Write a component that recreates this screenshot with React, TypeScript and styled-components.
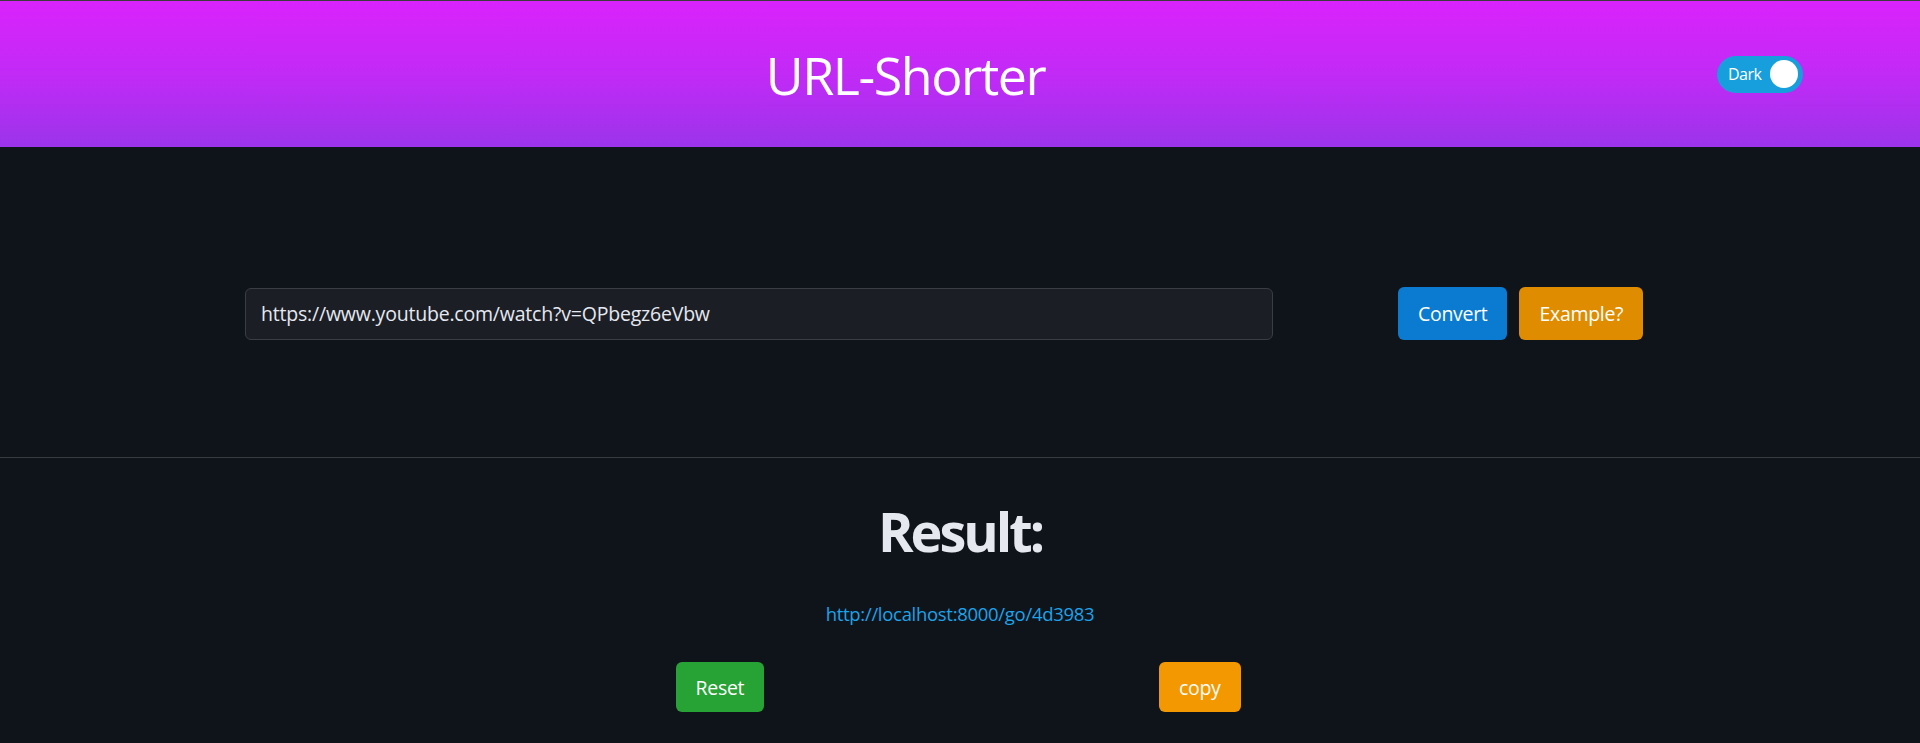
import React from 'react';
import styled, { createGlobalStyle } from 'styled-components';

const GlobalStyle = createGlobalStyle`
	html, body {
		margin: 0;
		padding: 0;
		background-color: #0f131a;
	}
	body {
		font-family: 'Open Sans', 'Noto Sans', sans-serif;
	}
	* {
		box-sizing: border-box;
	}
`;

const App = () => {
	return (
		<Page>
			<GlobalStyle />
			<Header>
				<Title>URL-Shorter</Title>
				<Toggle>
					<ToggleLabel>Dark</ToggleLabel>
					<Knob />
				</Toggle>
			</Header>
			<Form>
				<UrlInput defaultValue='https://www.youtube.com/watch?v=QPbegz6eVbw' />
				<Actions>
					<Button color='#0a7bd1'>Convert</Button>
					<Button color='#e08c00'>Example?</Button>
				</Actions>
			</Form>
			<Result>
				<ResultTitle>Result:</ResultTitle>
				<ResultLink href='#'>http://localhost:8000/go/4d3983</ResultLink>
				<ResultActions>
					<Button color='#27a234' small>
						Reset
					</Button>
					<Button color='#f39800' small>
						copy
					</Button>
				</ResultActions>
			</Result>
		</Page>
	);
};

const Page = styled.div`
	min-height: 100vh;
	background-color: #0f131a;
	color: #e6e8ef;
`;

const Header = styled.header`
	display: flex;
	flex-direction: row;
	align-items: center;
	height: 147px;
	padding: 0 117px 0 94px;
	border-top: 1px solid #3c3c3c;
	background: linear-gradient(180deg, #d923fc 0%, #c22af6 50%, #9b34ea 100%);
`;

const Title = styled.h1`
	flex: 1;
	margin: 0;
	text-align: center;
	font-size: 52px;
	font-weight: 400;
	color: #ffffff;
	letter-spacing: -1.5px;
`;

const Toggle = styled.div`
	display: flex;
	flex-direction: row;
	align-items: center;
	justify-content: space-between;
	width: 86px;
	height: 37px;
	padding: 0 5px 0 11px;
	border-radius: 19px;
	background-color: #169fdc;
`;

const ToggleLabel = styled.span`
	font-size: 16px;
	color: #ffffff;
	letter-spacing: -0.5px;
`;

const Knob = styled.span`
	width: 28px;
	height: 28px;
	border-radius: 50%;
	background-color: #ffffff;
`;

const Form = styled.section`
	display: flex;
	flex-direction: row;
	align-items: center;
	padding: 140px 0 117px 245px;
	border-bottom: 1px solid #363b3d;
`;

const UrlInput = styled.input`
	width: 1028px;
	height: 52px;
	padding: 0 15px;
	border: 1px solid #3a3d44;
	border-radius: 6px;
	background-color: #1b1e25;
	color: #e6e8ef;
	font-family: 'Open Sans', sans-serif;
	font-size: 19.5px;
	letter-spacing: -0.2px;
	outline: none;
`;

const Actions = styled.div`
	display: flex;
	flex-direction: row;
	gap: 12px;
	margin-left: 125px;
`;

const Button = styled.button<{ color: string; small?: boolean }>`
	height: ${(props) => (props.small ? '50px' : '53px')};
	padding: 0 ${(props) => (props.small ? '20px' : '20px')};
	border: none;
	border-radius: 6px;
	background-color: ${(props) => props.color};
	color: #ffffff;
	font-family: 'Open Sans', sans-serif;
	font-size: 19.5px;
	letter-spacing: -0.3px;
`;

const Result = styled.section`
	display: flex;
	flex-direction: column;
	align-items: center;
	padding-top: 36px;
`;

const ResultTitle = styled.h2`
	margin: 0;
	font-size: 54px;
	font-weight: 700;
	letter-spacing: -3px;
	color: #e6e8ef;
`;

const ResultLink = styled.a`
	margin-top: 33px;
	font-size: 18.5px;
	color: #1ba4ea;
	text-decoration: none;
	letter-spacing: -0.3px;
`;

const ResultActions = styled.div`
	display: flex;
	flex-direction: row;
	justify-content: space-between;
	width: 565px;
	margin-top: 36px;
	margin-right: 4px;
`;

export default App;
